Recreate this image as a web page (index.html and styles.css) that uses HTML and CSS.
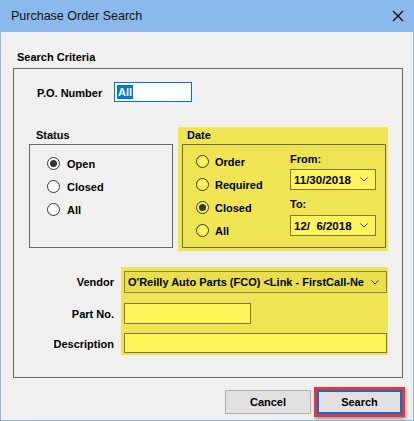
FILE: index.html
```html
<!DOCTYPE html>
<html>
<head>
<meta charset="utf-8">
<title>Purchase Order Search</title>
<link rel="stylesheet" href="styles.css">
</head>
<body>
<div class="window">
  <div class="titlebar">
    <span class="title">Purchase Order Search</span>
    <svg class="close" width="12" height="12" viewBox="0 0 12 12"><path d="M1 1 L11 11 M11 1 L1 11" stroke="#000" stroke-width="1.1" fill="none"/></svg>
  </div>
  <div class="content">
    <div class="group-title">Search Criteria</div>
    <div class="group">
      <div class="po-row">
        <span class="po-label">P.O. Number</span>
        <span class="po-input"><span class="sel">All</span></span>
      </div>
      <div class="mid-row">
        <div class="status-col">
          <div class="sub-title">Status</div>
          <div class="status-box">
            <div class="radio-row"><span class="radio checked"></span><span>Open</span></div>
            <div class="radio-row"><span class="radio"></span><span>Closed</span></div>
            <div class="radio-row"><span class="radio"></span><span>All</span></div>
          </div>
        </div>
        <div class="date-panel">
          <div class="sub-title date-title">Date</div>
          <div class="date-box">
            <div class="date-radios">
              <div class="radio-row"><span class="radio yellow"></span><span>Order</span></div>
              <div class="radio-row"><span class="radio yellow"></span><span>Required</span></div>
              <div class="radio-row"><span class="radio yellow checked"></span><span>Closed</span></div>
              <div class="radio-row"><span class="radio yellow"></span><span>All</span></div>
            </div>
            <div class="date-fields">
              <div class="field-label">From:</div>
              <div class="combo date-combo"><span class="val">11/30/2018</span><svg class="chev" width="8" height="5" viewBox="0 0 8 5"><path d="M0.5 0.5 L4 4 L7.5 0.5" stroke="#333" stroke-width="1" fill="none"/></svg></div>
              <div class="field-label to-label">To:</div>
              <div class="combo date-combo to-combo"><span class="val">12/  6/2018</span><svg class="chev" width="8" height="5" viewBox="0 0 8 5"><path d="M0.5 0.5 L4 4 L7.5 0.5" stroke="#333" stroke-width="1" fill="none"/></svg></div>
            </div>
          </div>
        </div>
      </div>
      <div class="vendor-row">
        <div class="vendor-labels">
          <div class="vl vl-vendor">Vendor</div>
          <div class="vl vl-part">Part No.</div>
          <div class="vl vl-desc">Description</div>
        </div>
        <div class="vendor-panel">
          <div class="combo vendor-combo"><span class="val">O'Reilly Auto Parts (FCO) &lt;Link - FirstCall-Ne</span><svg class="chev" width="8" height="5" viewBox="0 0 8 5"><path d="M0.5 0.5 L4 4 L7.5 0.5" stroke="#333" stroke-width="1" fill="none"/></svg></div>
          <div class="yinput part-input"></div>
          <div class="yinput desc-input"></div>
        </div>
      </div>
    </div>
    <div class="buttons">
      <button class="btn cancel">Cancel</button>
      <span class="highlight"><button class="btn search">Search</button></span>
    </div>
  </div>
</div>
</body>
</html>
```

FILE: styles.css
```css
* { box-sizing: border-box; }
html, body { margin: 0; padding: 0; background: #f0f0f0; }
body {
  font-family: "Liberation Sans", Arial, sans-serif;
  font-size: 11px;
  font-weight: bold;
  color: #000;
}
.window {
  width: 414px;
  height: 421px;
  border: 1px solid #8cb9ec;
  border-top: none;
  background: #f0f0f0;
}
.titlebar {
  height: 32px;
  margin: 0 -1px;
  background: #8cb9ec;
  display: flex;
  align-items: center;
  justify-content: space-between;
  padding: 0 10px 0 11px;
}
.title {
  font-family: "Liberation Sans", Arial, sans-serif;
  font-weight: normal;
  font-size: 12.5px;
  color: #111;
  margin-top: -1px;
}
.close { margin-top: -1px; }
.content { padding: 0; }
.group-title {
  line-height: 13px;
  padding-left: 16px;
  margin-top: 19px;
  height: 13px;
}
.group {
  margin-top: 4px;
  margin-left: 12px;
  width: 390px;
  height: 310px;
  border: 1px solid #6a6a6a;
}
.po-row {
  margin-top: 13px;
  padding-left: 23px;
  display: flex;
  align-items: center;
  height: 20px;
}
.po-label { width: 77px; padding-top: 1px; }
.po-input {
  width: 78px;
  height: 20px;
  border: 1px solid #0078d7;
  background: #fff;
  padding: 2px 0 0 2px;
}
.sel {
  display: inline-block;
  background: #0078d7;
  color: #fff;
  height: 14px;
  line-height: 14px;
  padding: 0 1px;
}
.mid-row {
  display: flex;
  margin-top: 25px;
  padding-left: 15px;
}
.status-col { width: 144px; }
.sub-title {
  height: 17px;
  line-height: 17px;
  padding-left: 7px;
}
.status-box {
  height: 104px;
  border: 1px solid #6a6a6a;
  padding: 7px 0 0 17px;
}
.radio-row {
  display: flex;
  align-items: center;
  height: 23px;
}
.radio {
  width: 13px;
  height: 13px;
  border-radius: 50%;
  border: 1px solid #333;
  background: #fff;
  margin-right: 7px;
  display: flex;
  align-items: center;
  justify-content: center;
}
.radio.yellow { background: #fff45a; margin-right: 6px; }
.radio.checked::after {
  content: "";
  width: 7px;
  height: 7px;
  border-radius: 50%;
  background: #333;
}
.date-panel {
  margin-left: 5px;
  width: 210px;
  height: 124px;
  background: #efe553;
  padding: 0 2px 3px 4px;
}
.date-title { padding-left: 5px; }
.date-box {
  height: 104px;
  border: 1px solid #6a6a3a;
  display: flex;
}
.date-radios {
  width: 107px;
  padding: 5px 0 0 13px;
}
.date-fields { padding-top: 6px; }
.field-label {
  height: 16px;
  line-height: 16px;
}
.to-label { margin-top: 6px; }
.combo {
  display: flex;
  align-items: center;
  justify-content: space-between;
  border: 1px solid #7c7840;
  white-space: pre;
  padding: 0 7px 0 3px;
}
.date-combo {
  width: 86px;
  height: 21px;
  margin-top: 2px;
  background: #fff45a;
  font-size: 11.5px;
}
.to-combo { margin-top: 3px; }
.vendor-row {
  display: flex;
  margin-top: 16px;
}
.vendor-labels {
  width: 100px;
  padding-top: 4px;
  text-align: right;
}
.vl { display: flex; align-items: center; justify-content: flex-end; }
.vl-vendor { height: 22px; }
.vl-part { height: 21px; margin-top: 10px; }
.vl-desc { height: 21px; margin-top: 9px; }
.vendor-panel {
  margin-left: 7px;
  width: 267px;
  height: 88px;
  background: #efe553;
  padding: 4px 1px 2px 3px;
}
.vendor-combo {
  height: 22px;
  background: #e9df4c;
  border-color: #8a8448;
  font-size: 11px;
  padding-left: 3px;
}
.chev { flex: none; margin-left: 4px; }
.yinput {
  background: #fff45a;
  border: 1px solid #7c7840;
}
.part-input { width: 127px; height: 21px; margin-top: 10px; }
.desc-input { width: 263px; height: 20px; margin-top: 9px; }
.buttons {
  display: flex;
  justify-content: flex-end;
  align-items: center;
  margin-top: 9px;
  padding-right: 8px;
}
.btn {
  font-family: "Liberation Sans", Arial, sans-serif;
  font-size: 11px;
  font-weight: bold;
  color: #000;
  background: #e1e1e1;
  height: 24px;
  margin: 0;
  padding: 0;
}
.cancel {
  width: 86px;
  border: 1px solid #adadad;
  margin-right: 3px;
}
.highlight {
  display: flex;
  border: 3px solid #e8333b;
  box-shadow: 1px 2px 3px rgba(0,0,0,0.35);
}
.search {
  width: 85px;
  border: 2px solid #0f6fc6;
}
```
